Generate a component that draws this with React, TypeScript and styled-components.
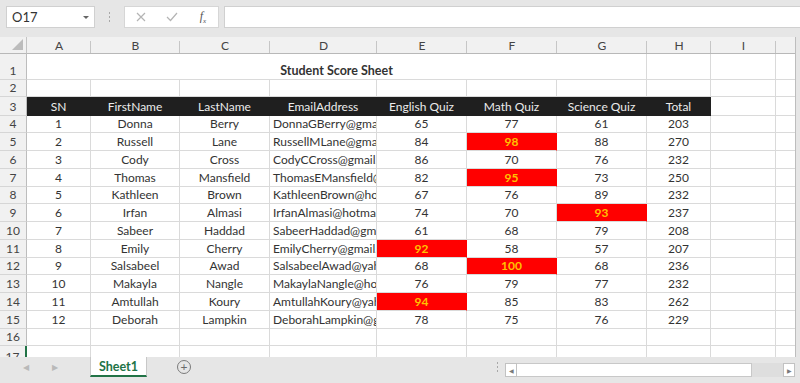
import React from 'react';
import styled, { createGlobalStyle } from 'styled-components';

const GlobalStyle = createGlobalStyle`
  html, body {
    margin: 0;
    padding: 0;
    background: #e6e6e6;
  }
  body {
    font-family: Lato, 'Open Sans', sans-serif;
  }
`;

const Window = styled.div`
  width: 800px;
  height: 383px;
  display: flex;
  flex-direction: column;
  background: #e6e6e6;
  overflow: hidden;
`;

/* ---------- formula bar ---------- */

const Toolbar = styled.div`
  height: 37px;
  display: flex;
  align-items: flex-start;
  padding: 6px 0 0 6px;
  box-sizing: border-box;
  gap: 0;
`;

const NameBox = styled.div`
  width: 89px;
  height: 22px;
  box-sizing: border-box;
  background: #fff;
  border: 1px solid #d0d0d0;
  display: flex;
  align-items: center;
  justify-content: space-between;
  padding: 0 5px 0 5px;
  font-size: 13px;
  color: #333;
`;

const Caret = styled.span`
  width: 0;
  height: 0;
  border-left: 3px solid transparent;
  border-right: 3px solid transparent;
  border-top: 3px solid #666;
  margin-top: 1px;
`;

const Grip = styled.div`
  width: 29px;
  height: 22px;
  display: flex;
  flex-direction: column;
  align-items: center;
  justify-content: center;
  gap: 2px;
  span {
    width: 1px;
    height: 2px;
    background: #a8a8a8;
  }
`;

const FxButtons = styled.div`
  width: 95px;
  height: 22px;
  box-sizing: border-box;
  background: #fff;
  border: 1px solid #d6d6d6;
  display: grid;
  grid-template-columns: 31px 32px 30px;
  align-items: center;
  justify-items: center;
`;

const FxLabel = styled.span`
  font-family: 'Liberation Serif', serif;
  font-style: italic;
  font-size: 12px;
  color: #555;
  sub {
    font-size: 7px;
  }
`;

const FormulaInput = styled.div`
  margin-left: 5px;
  flex: 1;
  height: 22px;
  box-sizing: border-box;
  background: #fff;
  border: 1px solid #d0d0d0;
  border-right: none;
`;

/* ---------- grid ---------- */

const COLS = [64, 89, 90, 107, 90, 90, 90, 64, 65, 20];
const LETTERS = ['A', 'B', 'C', 'D', 'E', 'F', 'G', 'H', 'I', ''];

const Sheet = styled.div`
  width: 796px;
  height: 320px;
  box-sizing: border-box;
  background: #fff;
  border-right: 1px solid #bdbdbd;
  overflow: hidden;
  display: grid;
  grid-template-columns: 27px ${COLS.map(c => c + 'px').join(' ')};
  grid-template-rows: 17px 25.7px 17.3px 18.7px repeat(13, 17.75px) 20px;
  font-size: 12px;
  color: #333;
`;

const Corner = styled.div`
  background: #f1f1f1;
  border-right: 1px solid #c4c4c4;
  border-bottom: 1px solid #b8b8b8;
  position: relative;
  &::after {
    content: '';
    position: absolute;
    right: 3px;
    bottom: 3px;
    border-left: 11px solid transparent;
    border-bottom: 11px solid #bcbcbc;
  }
`;

const ColHead = styled.div`
  background: #f1f1f1;
  border-bottom: 1px solid #b8b8b8;
  display: flex;
  align-items: center;
  justify-content: center;
  font-size: 12px;
  color: #444;
  position: relative;
  &::after {
    content: '';
    position: absolute;
    right: 0;
    top: 4px;
    bottom: 0;
    width: 1px;
    background: #c6c6c6;
  }
`;

const RowHead = styled.div<{ active?: boolean }>`
  background: #f1f1f1;
  border-right: ${p => (p.active ? '2px solid #217346' : '1px solid #bdbdbd')};
  border-bottom: 1px solid #d6d6d6;
  display: flex;
  align-items: flex-end;
  justify-content: center;
  padding-bottom: 1px;
  box-sizing: border-box;
  font-size: 12px;
  color: #444;
  overflow: hidden;
`;

type Variant = 'plain' | 'head' | 'hot' | 'title';

const Cell = styled.div<{ variant?: Variant; left?: boolean; span?: number }>`
  grid-column: ${p => (p.span ? `span ${p.span}` : 'auto')};
  box-sizing: border-box;
  border-right: 1px solid
    ${p => (p.variant === 'head' ? '#1f1f1f' : p.variant === 'hot' ? '#ff0000' : '#dadada')};
  border-bottom: 1px solid ${p => (p.variant === 'head' ? '#1f1f1f' : '#dadada')};
  background: ${p => (p.variant === 'head' ? '#1f1f1f' : p.variant === 'hot' ? '#ff0000' : '#fff')};
  color: ${p => (p.variant === 'head' ? '#ececec' : p.variant === 'hot' ? '#ffc000' : '#333')};
  font-weight: ${p => (p.variant === 'title' ? 700 : p.variant === 'hot' ? 700 : 400)};
  font-size: ${p => (p.variant === 'title' ? '12.5px' : '12px')};
  display: flex;
  align-items: flex-end;
  justify-content: ${p => (p.left ? 'flex-start' : 'center')};
  padding: 0 ${p => (p.left ? '0 1px 3px' : '0 1px 0')};
  white-space: nowrap;
  overflow: hidden;
  line-height: 15px;
`;

/* ---------- sheet tabs ---------- */

const TabBar = styled.div`
  height: 26px;
  display: flex;
  align-items: flex-start;
  background: #e6e6e6;
`;

const Nav = styled.div`
  width: 90px;
  height: 19px;
  display: flex;
  align-items: center;
  justify-content: flex-start;
  padding-left: 23px;
  box-sizing: border-box;
  gap: 23px;
  color: #b9b9b9;
  font-size: 8px;
`;

const Tab = styled.div`
  width: 57px;
  height: 20px;
  box-sizing: border-box;
  background: #fff;
  border-left: 1px solid #c8c8c8;
  border-right: 1px solid #c8c8c8;
  border-bottom: 2px solid #217346;
  display: flex;
  align-items: center;
  justify-content: center;
  color: #217346;
  font-weight: 700;
  font-size: 12.5px;
`;

const AddSheet = styled.div`
  margin: 3px 0 0 30px;
  width: 12px;
  height: 12px;
  border-radius: 50%;
  border: 1px solid #7a7a7a;
  display: flex;
  align-items: center;
  justify-content: center;
  color: #6a6a6a;
  font-size: 12px;
  line-height: 1;
`;

const Spacer = styled.div`
  flex: 1;
`;

const TabGrip = styled(Grip)`
  width: 15px;
  height: 20px;
`;

const HScroll = styled.div`
  width: 290px;
  height: 14px;
  margin: 6px 5px 0 0;
  display: flex;
  background: #dedede;
`;

const ScrollBtn = styled.div`
  width: 12px;
  height: 14px;
  box-sizing: border-box;
  background: #fff;
  border: 1px solid #c2c2c2;
  display: flex;
  align-items: center;
  justify-content: center;
  color: #7a7a7a;
  font-size: 6px;
`;

const Thumb = styled.div`
  width: 235px;
  height: 14px;
  box-sizing: border-box;
  background: #fff;
  border: 1px solid #c8c8c8;
  border-left: none;
`;

interface Student {
  first: string;
  last: string;
  email: string;
  english: number;
  math: number;
  science: number;
  total: number;
}

const students: Student[] = [
  { first: 'Donna', last: 'Berry', email: 'DonnaGBerry@gmail.com', english: 65, math: 77, science: 61, total: 203 },
  { first: 'Russell', last: 'Lane', email: 'RussellMLane@gmail.com', english: 84, math: 98, science: 88, total: 270 },
  { first: 'Cody', last: 'Cross', email: 'CodyCCross@gmail.com', english: 86, math: 70, science: 76, total: 232 },
  { first: 'Thomas', last: 'Mansfield', email: 'ThomasEMansfield@gmail.com', english: 82, math: 95, science: 73, total: 250 },
  { first: 'Kathleen', last: 'Brown', email: 'KathleenBrown@hotmail.com', english: 67, math: 76, science: 89, total: 232 },
  { first: 'Irfan', last: 'Almasi', email: 'IrfanAlmasi@hotmail.com', english: 74, math: 70, science: 93, total: 237 },
  { first: 'Sabeer', last: 'Haddad', email: 'SabeerHaddad@gmail.com', english: 61, math: 68, science: 79, total: 208 },
  { first: 'Emily', last: 'Cherry', email: 'EmilyCherry@gmail.com', english: 92, math: 58, science: 57, total: 207 },
  { first: 'Salsabeel', last: 'Awad', email: 'SalsabeelAwad@yahoo.com', english: 68, math: 100, science: 68, total: 236 },
  { first: 'Makayla', last: 'Nangle', email: 'MakaylaNangle@hotmail.com', english: 76, math: 79, science: 77, total: 232 },
  { first: 'Amtullah', last: 'Koury', email: 'AmtullahKoury@yahoo.com', english: 94, math: 85, science: 83, total: 262 },
  { first: 'Deborah', last: 'Lampkin', email: 'DeborahLampkin@gmail.com', english: 78, math: 75, science: 76, total: 229 },
];

const HEADERS = ['SN', 'FirstName', 'LastName', 'EmailAddress', 'English Quiz', 'Math Quiz', 'Science Quiz', 'Total'];

const score = (n: number) => <Cell variant={n >= 90 ? 'hot' : 'plain'}>{n}</Cell>;

const EmptyCells: React.FC<{ count: number }> = ({ count }) => (
  <>
    {Array.from({ length: count }).map((_, i) => (
      <Cell key={i} />
    ))}
  </>
);

const App: React.FC = () => (
  <Window>
    <GlobalStyle />
    <Toolbar>
      <NameBox>
        O17
        <Caret />
      </NameBox>
      <Grip>
        <span />
        <span />
        <span />
      </Grip>
      <FxButtons>
        <svg width="10" height="10" viewBox="0 0 10 10">
          <path d="M1 1 L9 9 M9 1 L1 9" stroke="#b4b4b4" strokeWidth="1.2" fill="none" />
        </svg>
        <svg width="12" height="10" viewBox="0 0 12 10">
          <path d="M1 5 L4.5 8.5 L11 1" stroke="#b4b4b4" strokeWidth="1.2" fill="none" />
        </svg>
        <FxLabel>
          f<sub>x</sub>
        </FxLabel>
      </FxButtons>
      <FormulaInput />
    </Toolbar>

    <Sheet>
      <Corner />
      {LETTERS.map((l, i) => (
        <ColHead key={i}>{l}</ColHead>
      ))}

      <RowHead>1</RowHead>
      <Cell variant="title" span={7}>Student Score Sheet</Cell>
      <EmptyCells count={3} />

      <RowHead>2</RowHead>
      <EmptyCells count={10} />

      <RowHead>3</RowHead>
      {HEADERS.map(h => (
        <Cell key={h} variant="head">{h}</Cell>
      ))}
      <EmptyCells count={2} />

      {students.map((s, i) => (
        <React.Fragment key={s.email}>
          <RowHead>{i + 4}</RowHead>
          <Cell>{i + 1}</Cell>
          <Cell>{s.first}</Cell>
          <Cell>{s.last}</Cell>
          <Cell left>{s.email}</Cell>
          {score(s.english)}
          {score(s.math)}
          {score(s.science)}
          <Cell>{s.total}</Cell>
          <EmptyCells count={2} />
        </React.Fragment>
      ))}

      <RowHead>16</RowHead>
      <EmptyCells count={10} />

      <RowHead active>17</RowHead>
      <EmptyCells count={10} />
    </Sheet>

    <TabBar>
      <Nav>
        <span>◀</span>
        <span>▶</span>
      </Nav>
      <Tab>Sheet1</Tab>
      <AddSheet>+</AddSheet>
      <Spacer />
      <TabGrip>
        <span />
        <span />
        <span />
      </TabGrip>
      <HScroll>
        <ScrollBtn>◀</ScrollBtn>
        <Thumb />
        <Spacer />
        <ScrollBtn>▶</ScrollBtn>
      </HScroll>
    </TabBar>
  </Window>
);

export default App;
